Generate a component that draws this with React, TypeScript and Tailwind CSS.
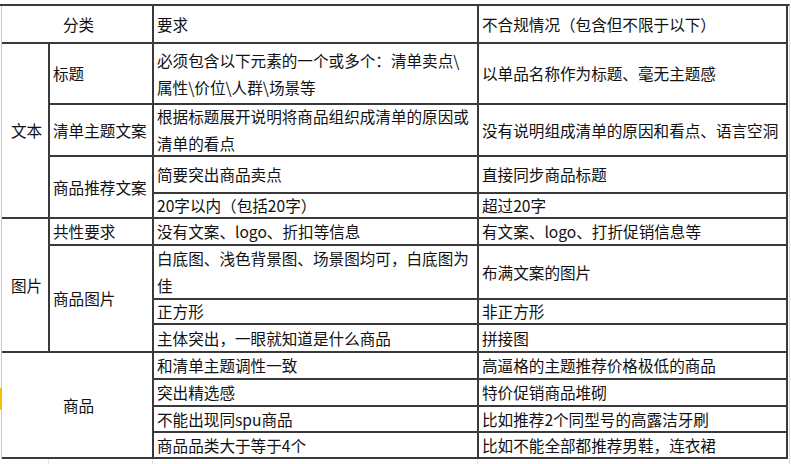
import React from "react";

type CellProps = { className?: string; children?: React.ReactNode };

// one bordered cell of the rules sheet; every cell draws its own right + bottom line
const Cell = ({ className = "", children }: CellProps) => (
  <div
    className={`flex items-center border-r-2 border-b-2 border-[#3a3a3a] pl-[3px] leading-[27px] whitespace-nowrap ${className}`}
  >
    <div>{children}</div>
  </div>
);

const rows: [string, string][] = [
  ["和清单主题调性一致", "高逼格的主题推荐价格极低的商品"],
  ["突出精选感", "特价促销商品堆砌"],
  ["不能出现同spu商品", "比如推荐2个同型号的高露洁牙刷"],
  ["商品品类大于等于4个", "比如不能全部都推荐男鞋，连衣裙"],
];

const App = () => {
  return (
    <div className="relative w-[791px] h-[464px] overflow-hidden bg-white pt-[4px] text-[15.6px] text-[#111] [text-spacing-trim:space-all] font-['Noto_Sans_CJK_SC','Microsoft_YaHei',sans-serif]">
      <div className="w-[790px] border-t-2 border-r border-t-[#3a3a3a] border-r-[#d6d6d6]">
        <div className="ml-[1px] grid grid-cols-[48px_104px_325px_309px] grid-rows-[38px_61px_52px_37px_25px_27px_54px_25px_28px_27px_27px_26px_26px] border-l border-[#c8c8c8]">
          {/* header */}
          <Cell className="col-span-2 justify-center pl-0">分类</Cell>
          <Cell>要求</Cell>
          <Cell>不合规情况（包含但不限于以下）</Cell>

          {/* 文本 */}
          <Cell className="row-span-4 justify-center pl-0">文本</Cell>
          <Cell>标题</Cell>
          <Cell>
            必须包含以下元素的一个或多个：清单卖点\
            <br />
            属性\价位\人群\场景等
          </Cell>
          <Cell>以单品名称作为标题、毫无主题感</Cell>

          <Cell>清单主题文案</Cell>
          <Cell>
            根据标题展开说明将商品组织成清单的原因或
            <br />
            清单的看点
          </Cell>
          <Cell>没有说明组成清单的原因和看点、语言空洞</Cell>

          <Cell className="row-span-2">商品推荐文案</Cell>
          <Cell>简要突出商品卖点</Cell>
          <Cell>直接同步商品标题</Cell>
          <Cell>20字以内（包括20字）</Cell>
          <Cell>超过20字</Cell>

          {/* 图片 */}
          <Cell className="row-span-4 justify-center pl-0">图片</Cell>
          <Cell>共性要求</Cell>
          <Cell>没有文案、logo、折扣等信息</Cell>
          <Cell>有文案、logo、打折促销信息等</Cell>

          <Cell className="row-span-3">商品图片</Cell>
          <Cell>
            白底图、浅色背景图、场景图均可，白底图为
            <br />
            佳
          </Cell>
          <Cell>布满文案的图片</Cell>
          <Cell>正方形</Cell>
          <Cell>非正方形</Cell>
          <Cell>主体突出，一眼就知道是什么商品</Cell>
          <Cell>拼接图</Cell>

          {/* 商品 */}
          <Cell className="col-span-2 row-span-4 justify-center pl-0">商品</Cell>
          {rows.map(([req, bad]) => (
            <React.Fragment key={req}>
              <Cell>{req}</Cell>
              <Cell>{bad}</Cell>
            </React.Fragment>
          ))}
        </div>

        {/* next (empty) sheet row, faint grid lines */}
        <div className="ml-[1px] grid grid-cols-[48px_104px_325px_309px] h-[8px]">
          <div className="border-r border-[#e2e2e2]" />
          <div className="border-r border-[#e2e2e2]" />
          <div className="border-r border-[#e2e2e2]" />
          <div />
        </div>
      </div>

      {/* selection marker left edge */}
      <div className="absolute left-0 top-[388px] h-[22px] w-[2px] bg-[#f2c200]" />
    </div>
  );
};

export default App;
